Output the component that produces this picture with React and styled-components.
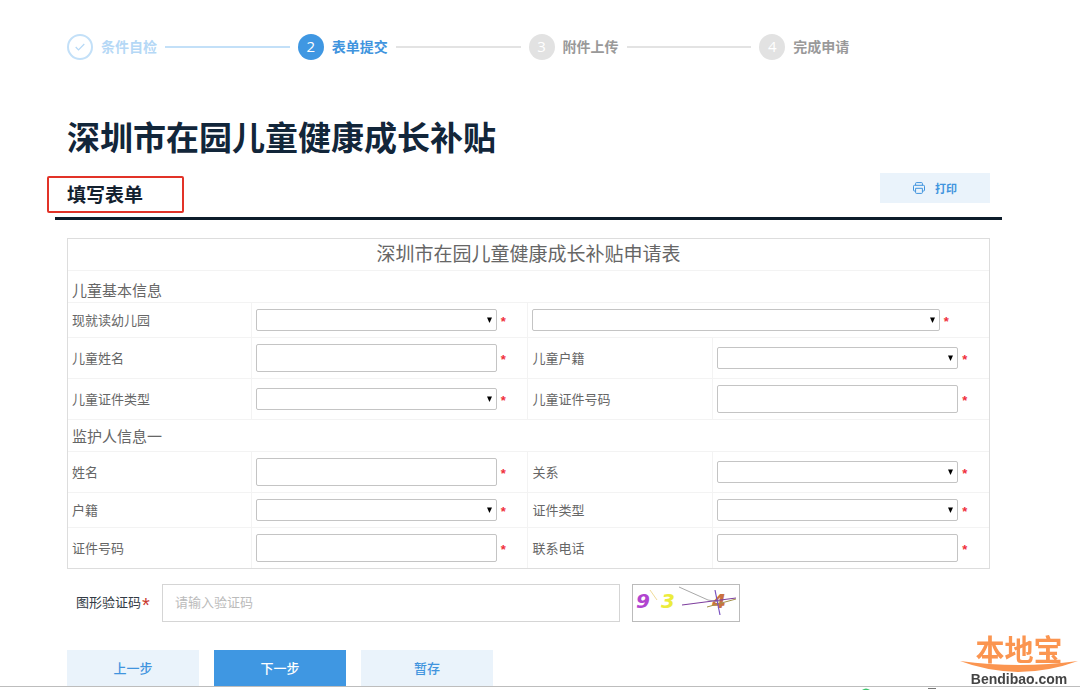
import React, { useState } from "react";
import styled, { createGlobalStyle } from "styled-components";

const GlobalStyle = createGlobalStyle`
*, *::before, *::after {
    box-sizing: border-box;
}
body {
    margin: 0;
    background: #fff;
    color: #666;
    font-family: "Noto Sans CJK SC", sans-serif;
    font-size: 13px;
}
button, input, select {
    font-family: inherit;
}
`
const Page = styled.main`
padding: 34px 78px 0 55px;
`
const Inner = styled.div`
padding: 0 12px;
`

const Steps = styled.ol`
display: flex;
list-style: none;
margin: 0;
padding: 0;
`
const stepColors = {
    done: { text: "#b5d8f6", line: "#c3e0f8", bg: "#fff", num: "#b5d8f6" },
    current: { text: "#4094de", line: "#e3e3e3", bg: "#3f97e2", num: "#fff" },
    todo: { text: "#999", line: "#e3e3e3", bg: "#e2e2e2", num: "#fff" },
}
const Step = styled.li`
flex: 1;
display: flex;
align-items: center;
gap: 8px;
height: 26px;
color: ${p => stepColors[p.$state].text};
font-size: 14px;
font-weight: 700;
white-space: nowrap;

&:not(:last-child)::after {
    content: "";
    flex: 1;
    height: 2px;
    margin-right: 8px;
    background: ${p => stepColors[p.$state].line};
}
`
const StepDot = styled.span`
display: flex;
align-items: center;
justify-content: center;
width: 26px;
height: 26px;
border-radius: 50%;
border: ${p => p.$state === "done" ? "2px solid #c3e0f8" : "0"};
background: ${p => stepColors[p.$state].bg};
color: ${p => stepColors[p.$state].num};
font-family: "Open Sans", sans-serif;
font-size: 15px;
line-height: 20px;
font-weight: 400;
padding-bottom: ${p => p.$state === "done" ? "0" : "2px"};
`
const StepName = styled.span`
line-height: 20px;
padding-bottom: 2px;
`

const Title = styled.h1`
margin: 54px 0 0;
color: #12263a;
font-size: 33px;
line-height: 44px;
font-weight: 700;
`
const SubHead = styled.div`
display: flex;
justify-content: space-between;
align-items: center;
height: 47px;
margin-top: 15px;
padding: 0 12px;
border-bottom: 3px solid #0d1c2a;
`
const SubTitle = styled.h2`
position: relative;
margin: 0 0 2px;
color: #12202e;
font-size: 19px;
line-height: 24px;
font-weight: 700;

&::after {
    content: "";
    position: absolute;
    top: -6px;
    right: -41px;
    bottom: -7px;
    left: -20px;
    border: 2px solid #e23328;
    border-radius: 2px;
}
`
const PrintButton = styled.button`
align-self: flex-start;
display: flex;
align-items: center;
justify-content: center;
gap: 10px;
width: 110px;
height: 30px;
padding: 0;
border: 0;
background: #eaf3fb;
color: #4094de;
font-size: 11px;
font-weight: 700;
`

const FormTable = styled.table`
width: 100%;
margin-top: 18px;
table-layout: fixed;
border: 1px solid #ddd;
border-collapse: separate;
border-spacing: 0;

td, th {
    border-bottom: 1px solid #f3f3f3;
    border-right: 1px solid #f3f3f3;
}
tr > :last-child {
    border-right: 0;
}
tr:last-child > * {
    border-bottom: 0;
}
`
const TableTitle = styled.th`
height: 32px;
padding: 0 0 3px;
font-size: 19px;
line-height: 28px;
font-weight: 400;
`
const SectionCell = styled.th`
height: 32px;
padding: ${p => p.$low ? "7px 4px 0" : "0 4px"};
font-size: 15px;
line-height: 22px;
font-weight: 400;
text-align: left;
`
const LabelCell = styled.th`
padding: 0 4px;
font-weight: 400;
line-height: 20px;
text-align: left;
`
const FieldCell = styled.td`
padding: 6px 4px;
`
const Field = styled.div`
display: flex;
align-items: center;
gap: 4px;
`
const Star = styled.span`
color: #f0303c;
font-family: "Liberation Sans", sans-serif;
font-size: 13px;
line-height: 16px;
font-weight: 700;
padding-top: 4px;
`
const TextInput = styled.input`
width: 90%;
height: 28px;
padding: 0 6px;
border: 1px solid #c4c4c4;
border-radius: 2px;
background: #fff;
`
const SelectWrap = styled.div`
position: relative;
width: 90%;
`
const Select = styled.select`
appearance: none;
display: block;
width: 100%;
height: 22px;
padding: 0 16px 0 4px;
border: 1px solid #c4c4c4;
border-radius: 2px;
background: #fff;
`
const Arrow = styled.svg`
position: absolute;
top: 8px;
right: 5px;
width: 5px;
height: 6px;
pointer-events: none;
`

const CodeRow = styled.div`
display: flex;
align-items: center;
height: 38px;
margin-top: 15px;
`
const CodeLabel = styled.label`
flex: 0 0 95px;
display: flex;
align-items: center;
gap: 1px;
padding: 0 0 3px 9px;
color: #333b45;
line-height: 20px;
white-space: nowrap;
`
const CodeStar = styled.span`
padding-top: 6px;
color: #c8372d;
font-family: "Liberation Sans", sans-serif;
font-size: 20px;
line-height: 20px;
`
const CodeInput = styled.input`
flex: 0 1 458px;
min-width: 0;
height: 38px;
padding: 0 12px 3px;
border: 1px solid #d5d5d5;
font-size: 13px;

&::placeholder {
    color: #bbb;
    opacity: 1;
}
`
const Captcha = styled.svg`
flex: none;
width: 108px;
height: 38px;
margin-left: 12px;
border: 1px solid #bbb;

text {
    font-family: "DejaVu Sans", sans-serif;
    font-size: 20px;
    font-style: italic;
    font-weight: 700;
}
`

const Actions = styled.div`
display: flex;
gap: 15px;
margin-top: 28px;
`
const ActionButton = styled.button`
width: 132px;
height: 38px;
padding: 0 0 3px;
border: 0;
background: ${p => p.$primary ? "#3f97e2" : "#eaf3fb"};
color: ${p => p.$primary ? "#fff" : "#4094de"};
font-size: 13px;
font-weight: 500;
`

const BottomBar = styled.footer`
position: fixed;
left: 0;
right: 0;
bottom: 0;
height: 4px;
background: #fff;
border-top: 1px solid #bdbdbd;

svg {
    position: absolute;
    right: 138px;
    bottom: 0;
}
`
const Brand = styled.div`
position: fixed;
right: 2px;
bottom: 4px;
width: 118px;
display: flex;
flex-direction: column;
align-items: center;
`
const BrandName = styled.span`
color: #fb9550;
font-size: 29px;
line-height: 30px;
font-weight: 700;
`
const BrandSwoosh = styled.svg`
display: block;
width: 118px;
height: 12px;
margin-top: -3px;
`
const BrandSite = styled.span`
color: #444;
font-family: "Liberation Sans", sans-serif;
font-size: 14px;
line-height: 14px;
font-weight: 700;
`

const steps = [
    { name: "条件自检", state: "done" },
    { name: "表单提交", state: "current" },
    { name: "附件上传", state: "todo" },
    { name: "完成申请", state: "todo" },
]
const sections = [
    {
        title: "儿童基本信息",
        low: true,
        rows: [
            [{ id: "school", label: "现就读幼儿园", type: "select" }, { id: "schoolName", type: "select" }],
            [{ id: "childName", label: "儿童姓名" }, { id: "childHome", label: "儿童户籍", type: "select" }],
            [{ id: "childIdType", label: "儿童证件类型", type: "select" }, { id: "childIdNo", label: "儿童证件号码" }],
        ],
    },
    {
        title: "监护人信息一",
        rows: [
            [{ id: "name", label: "姓名" }, { id: "relation", label: "关系", type: "select" }],
            [{ id: "home", label: "户籍", type: "select" }, { id: "idType", label: "证件类型", type: "select" }],
            [{ id: "idNo", label: "证件号码" }, { id: "phone", label: "联系电话" }],
        ],
    },
]

const PrinterIcon = () => (
    <svg width="12" height="12" viewBox="0 0 12 12" fill="none" stroke="currentColor" strokeLinejoin="round" aria-hidden="true">
        <path d="M2.6 3.2V1.4a.8.8 0 0 1 .8-.8h5.2a.8.8 0 0 1 .8.8v1.8" />
        <path d="M2.6 9H1.4a.9.9 0 0 1-.9-.9V4.2a.9.9 0 0 1 .9-.9h9.2a.9.9 0 0 1 .9.9v3.9a.9.9 0 0 1-.9.9H9.4" />
        <path d="M2.6 6.3h6.8v4.3a.8.8 0 0 1-.8.8H3.4a.8.8 0 0 1-.8-.8z" />
    </svg>
)

const Control = ({ field }) => {
    // a field without its own label cell is named for screen readers only
    const name = field.label ? undefined : "幼儿园"
    return (
        <Field>
            {field.type === "select" ? (
                <SelectWrap>
                    <Select id={field.id} aria-label={name} defaultValue="">
                        <option value=""></option>
                    </Select>
                    <Arrow viewBox="0 0 5 6" aria-hidden="true"><path d="M0 .5h5L2.5 6z" fill="#000" /></Arrow>
                </SelectWrap>
            ) : (
                <TextInput id={field.id} type="text" />
            )}
            <Star>*</Star>
        </Field>
    )
}

const FormRow = ({ fields }) => (
    <tr>
        {fields.map(f => (
            <React.Fragment key={f.id}>
                {f.label && <LabelCell scope="row"><label htmlFor={f.id}>{f.label}</label></LabelCell>}
                <FieldCell colSpan={f.label ? 1 : 2}><Control field={f} /></FieldCell>
            </React.Fragment>
        ))}
    </tr>
)

export default () => {
    const [code, setCode] = useState("")
    return (<>
        <GlobalStyle />
        <Page>
            <Inner>
                <Steps>
                    {steps.map((s, i) => (
                        <Step key={s.name} $state={s.state}>
                            <StepDot $state={s.state}>
                                {s.state === "done" ? (
                                    <svg width="10" height="8" viewBox="0 0 10 8" fill="none" stroke="currentColor" strokeWidth="1.2">
                                        <path d="M.7 4l2.8 2.8L9.3 1" />
                                    </svg>
                                ) : i + 1}
                            </StepDot>
                            <StepName>{s.name}</StepName>
                        </Step>
                    ))}
                </Steps>
                <Title>深圳市在园儿童健康成长补贴</Title>
            </Inner>
            <SubHead>
                <SubTitle>填写表单</SubTitle>
                <PrintButton type="button" onClick={() => window.print()}>
                    <PrinterIcon />打印
                </PrintButton>
            </SubHead>
            <Inner as="form" onSubmit={e => e.preventDefault()}>
                <FormTable>
                    <colgroup>
                        <col width="20%" />
                        <col width="30%" />
                        <col width="20%" />
                        <col width="30%" />
                    </colgroup>
                    <tbody>
                        <tr><TableTitle colSpan={4}>深圳市在园儿童健康成长补贴申请表</TableTitle></tr>
                        {sections.map(s => (
                            <React.Fragment key={s.title}>
                                <tr><SectionCell colSpan={4} $low={s.low}>{s.title}</SectionCell></tr>
                                {s.rows.map(r => <FormRow key={r[0].id} fields={r} />)}
                            </React.Fragment>
                        ))}
                    </tbody>
                </FormTable>
                <CodeRow>
                    <CodeLabel htmlFor="code">图形验证码<CodeStar>*</CodeStar></CodeLabel>
                    <CodeInput id="code" placeholder="请输入验证码" value={code} onChange={e => setCode(e.target.value)} />
                    <Captcha viewBox="0 0 106 36" role="img" aria-label="验证码">
                        <text x="3" y="23" fill="#b144cf">9</text>
                        <text x="28" y="23" fill="#ecec3c">3</text>
                        <text x="79" y="23" fill="#c9723f">4</text>
                        <g fill="none">
                            <path d="M17 5l7 10" stroke="#f0dc9a" />
                            <path d="M46 2l29 13 12 2" stroke="#a9a9a9" />
                            <path d="M49 20l54-7" stroke="#7e3f9e" strokeWidth="1.2" />
                            <path d="M74 22l29-8" stroke="#a3914a" />
                            <path d="M82 5l5 25" stroke="#7a52c0" strokeWidth="1.2" />
                        </g>
                    </Captcha>
                </CodeRow>
                <Actions>
                    <ActionButton type="button">上一步</ActionButton>
                    <ActionButton type="submit" $primary>下一步</ActionButton>
                    <ActionButton type="button">暂存</ActionButton>
                </Actions>
            </Inner>
        </Page>
        <Brand>
            <BrandName>本地宝</BrandName>
            <BrandSwoosh viewBox="0 0 118 12" aria-hidden="true">
                <path d="M0 1Q59 9 118 1Q88 12 58 12Q26 11 0 1z" fill="#fb9550" />
            </BrandSwoosh>
            <BrandSite>Bendibao.com</BrandSite>
        </Brand>
        <BottomBar>
            <svg width="80" height="3" viewBox="0 0 80 3" aria-hidden="true">
                <path d="M0 3Q4 0 8 3z" fill="#3cc46c" />
                <path d="M66 1h8v1h-8z" fill="#777" />
            </svg>
        </BottomBar>
    </>
    )
}
